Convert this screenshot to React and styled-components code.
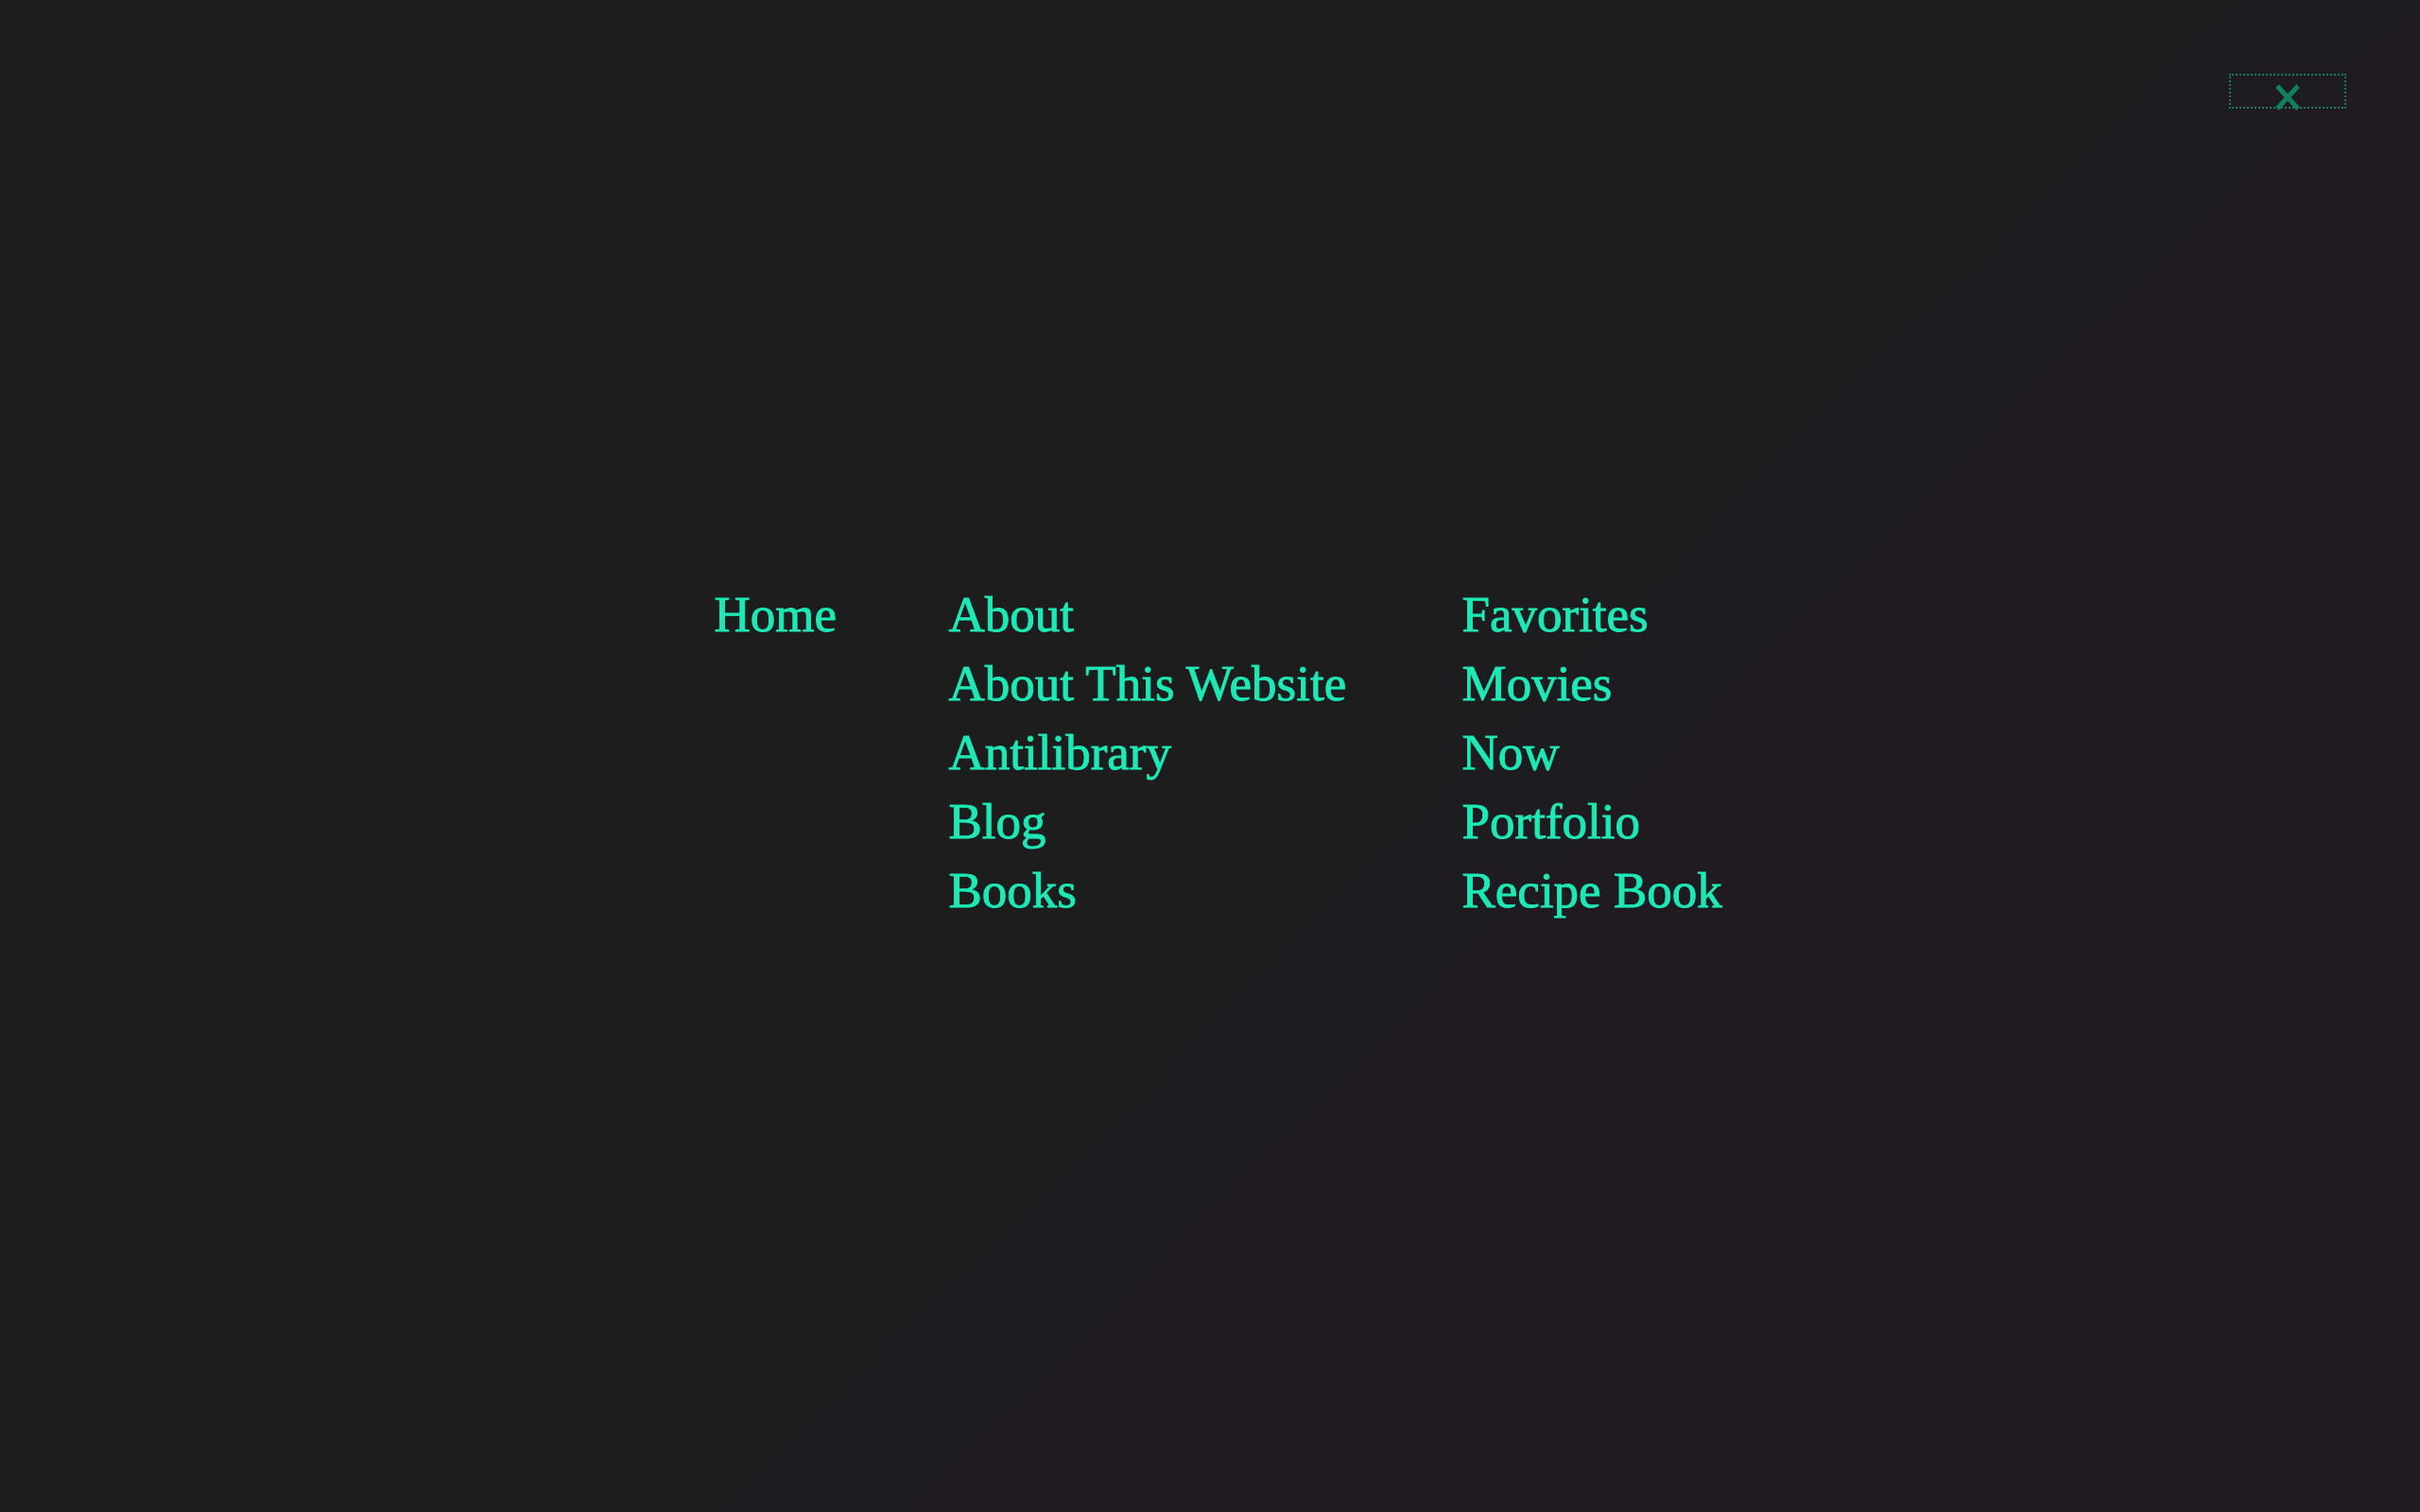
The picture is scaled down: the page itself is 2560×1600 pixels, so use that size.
import React from "react";
import styled, { createGlobalStyle } from "styled-components";

const GlobalStyle = createGlobalStyle`
  html, body {
    margin: 0;
    padding: 0;
    height: 100%;
  }
  body {
    font-family: "Liberation Serif", "Times New Roman", serif;
    background: #1d1d1d;
  }
`;

const Overlay = styled.div`
  position: relative;
  min-height: 100vh;
  display: flex;
  justify-content: center;
  align-items: center;
  background: linear-gradient(
    135deg,
    #1d1d1d 0%,
    #1d1d1d 50%,
    #1d1c20 58%,
    #201b21 64%,
    #201b21 100%
  );
`;

const CloseButton = styled.button`
  position: absolute;
  top: 78px;
  right: 78px;
  width: 124px;
  height: 37px;
  padding: 0;
  display: flex;
  justify-content: center;
  align-items: flex-start;
  background: transparent;
  border: 2px dotted #137a5f;
  cursor: pointer;

  svg {
    margin-top: 9px;
    flex-shrink: 0;
  }
`;

const Nav = styled.nav`
  display: grid;
  grid-template-columns: 248px 543px 258px;
  align-items: start;
  margin-top: -8px;
`;

const Column = styled.ul`
  list-style: none;
  margin: 0;
  padding: 0;
`;

const Item = styled.li`
  font-size: 53px;
  line-height: 73px;
  white-space: nowrap;
`;

const Link = styled.a`
  color: #1de9b6;
  text-decoration: none;
  -webkit-text-stroke: 0.9px #1de9b6;
`;

const columns = [
  ["Home"],
  ["About", "About This Website", "Antilibrary", "Blog", "Books"],
  ["Favorites", "Movies", "Now", "Portfolio", "Recipe Book"],
];

const CloseIcon = () => (
  <svg width="30" height="28" viewBox="0 0 30 28">
    <path
      d="M4 2 L26 26 M26 2 L4 26"
      stroke="#0f8062"
      strokeWidth="5"
      fill="none"
    />
  </svg>
);

const App = () => {
  return (
    <>
      <GlobalStyle />
      <Overlay>
        <CloseButton aria-label="Close menu">
          <CloseIcon />
        </CloseButton>
        <Nav>
          {columns.map((col, i) => (
            <Column key={i}>
              {col.map((label) => (
                <Item key={label}>
                  <Link href="#">{label}</Link>
                </Item>
              ))}
            </Column>
          ))}
        </Nav>
      </Overlay>
    </>
  );
};

export default App;
